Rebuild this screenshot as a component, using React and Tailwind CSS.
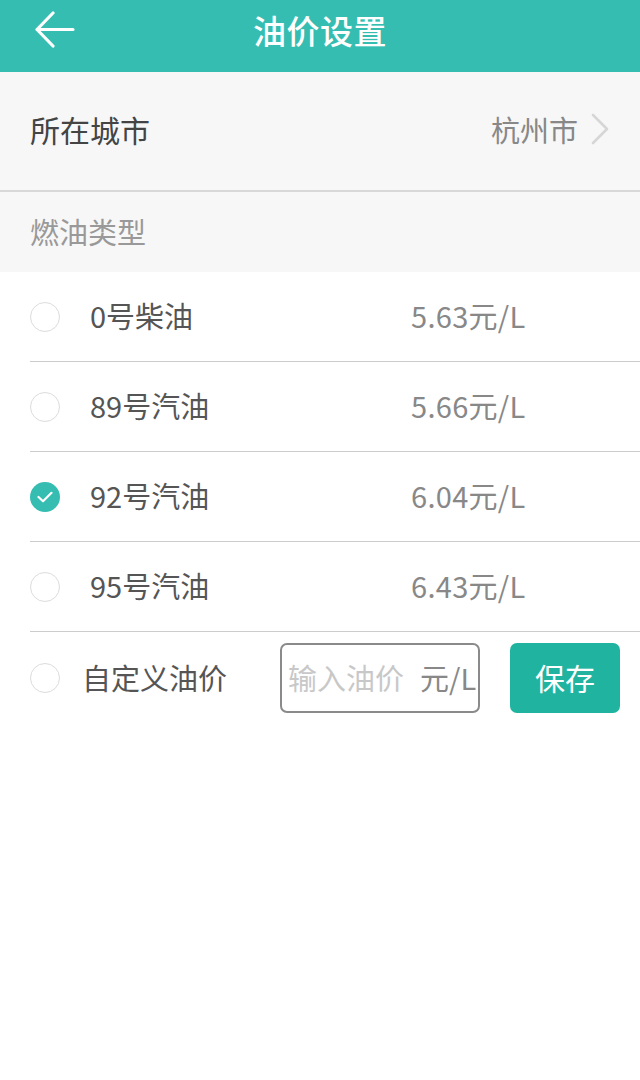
import React from "react";

const font = { fontFamily: '"Noto Sans CJK SC", "Noto Sans", sans-serif' };

function Radio({ checked }) {
  if (checked) {
    return (
      <div className="w-[30px] h-[30px] rounded-full bg-[#35bdb1] flex items-center justify-center shrink-0">
        <svg width="16" height="12" viewBox="0 0 16 12" fill="none">
          <path d="M1.5 6 L6 10.2 L14.5 1.8" stroke="white" strokeWidth="2.2" strokeLinecap="round" strokeLinejoin="round" />
        </svg>
      </div>
    );
  }
  return <div className="w-[30px] h-[30px] rounded-full border-[1.5px] border-[#dcdcdc] shrink-0" />;
}

const rows = [
  { name: "0号柴油", price: "5.63元/L", checked: false },
  { name: "89号汽油", price: "5.66元/L", checked: false },
  { name: "92号汽油", price: "6.04元/L", checked: true },
  { name: "95号汽油", price: "6.43元/L", checked: false },
];

export default function App() {
  return (
    <div className="w-[640px] h-[1080px] bg-white" style={font}>
      <div className="h-[72px] bg-[#35bdb1] relative flex items-center justify-center">
        <svg className="absolute left-[34px] top-[11px]" width="42" height="38" viewBox="0 0 42 38" fill="none">
          <path d="M19 2 L3 18.5 L19 35 M3 18.5 H39" stroke="white" strokeWidth="3.2" strokeLinecap="round" strokeLinejoin="round" />
        </svg>
        <div className="text-white text-[33px] font-medium leading-none -mt-[12px] tracking-[0.5px]">油价设置</div>
      </div>

      <div className="h-[118px] bg-[#f7f7f7] flex items-center justify-between pl-[30px] pr-[30px]">
        <div className="text-[30px] text-[#444] leading-none -mt-[4px]">所在城市</div>
        <div className="flex items-center">
          <div className="text-[29px] text-[#888] leading-none -mt-[4px]">杭州市</div>
          <svg className="ml-[12px] -mt-[4px]" width="20" height="32" viewBox="0 0 20 32" fill="none">
            <path d="M3 2 L17 16 L3 30" stroke="#d6d6d6" strokeWidth="2.6" strokeLinecap="round" strokeLinejoin="round" />
          </svg>
        </div>
      </div>
      <div className="h-[2px] bg-[#d8d8d8]" />
      <div className="h-[80px] bg-[#f7f7f7] flex items-center pl-[30px]">
        <div className="text-[29px] text-[#999] leading-none -mt-[2px]">燃油类型</div>
      </div>

      <div className="pl-[30px]">
        {rows.map((r) => (
          <div key={r.name} className="h-[90px] border-b border-[#cccccc] flex items-center">
            <Radio checked={r.checked} />
            <div className="ml-[30px] w-[321px] text-[29px] text-[#555] leading-none -mt-[2px]">{r.name}</div>
            <div className="text-[29px] text-[#888] leading-none -mt-[2px] tracking-[0.3px]">{r.price}</div>
          </div>
        ))}
        <div className="h-[92px] flex items-center">
          <Radio />
          <div className="ml-[22px] w-[198px] text-[29px] text-[#555] leading-none -mt-[2px]">自定义油价</div>
          <div className="w-[200px] h-[70px] border-2 border-[#8a8a8a] rounded-[7px] flex items-center pl-[6px] overflow-hidden">
            <span className="text-[29px] text-[#c8c8c8] leading-none -mt-[2px] whitespace-nowrap">输入油价</span>
            <span className="ml-[16px] text-[29px] text-[#888] leading-none -mt-[2px] whitespace-nowrap">元/L</span>
          </div>
          <div className="ml-[30px] w-[110px] h-[70px] rounded-[7px] bg-[#20b3a0] flex items-center justify-center">
            <span className="text-white text-[30px] leading-none -mt-[2px]">保存</span>
          </div>
        </div>
      </div>
    </div>
  );
}
